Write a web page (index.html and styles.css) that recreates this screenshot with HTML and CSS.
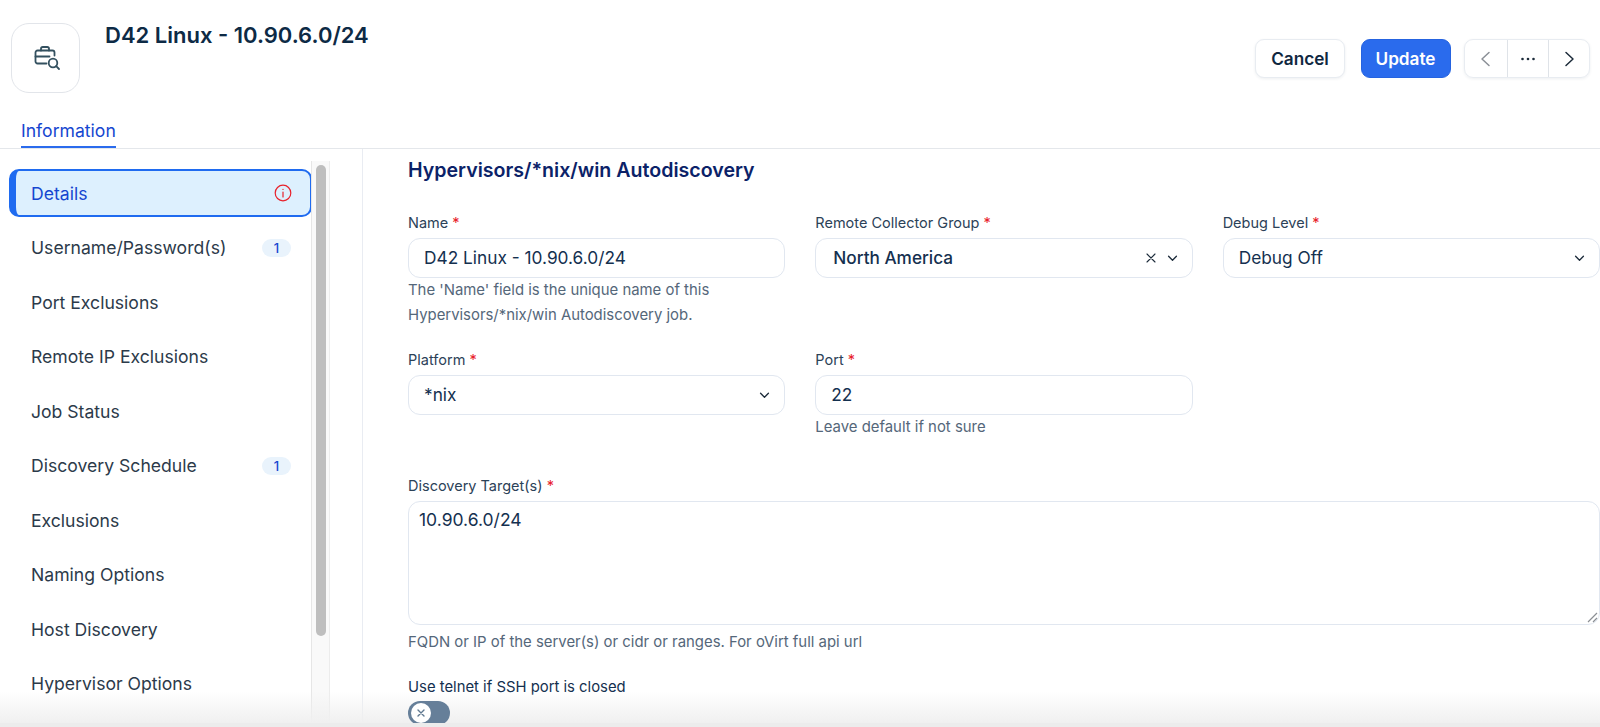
FILE: index.html
```html
<!DOCTYPE html>
<html lang="en">
<head>
<meta charset="utf-8">
<title>D42 Linux - 10.90.6.0/24</title>
<link rel="stylesheet" href="styles.css">
</head>
<body>
<div class="page">
  <header class="header">
    <div class="app-icon">
      <svg width="30" height="30" viewBox="0 0 30 30" fill="none" stroke="#33505f" stroke-width="1.8" stroke-linecap="round" stroke-linejoin="round">
        <path d="M15.5 20.5H6.5a2 2 0 0 1-2-2V9.5a2 2 0 0 1 2-2h15a2 2 0 0 1 2 2v3"/>
        <path d="M10 7.5V5.8A1.8 1.8 0 0 1 11.8 4h4.4A1.8 1.8 0 0 1 18 5.800V7.500"/>
        <path d="M4.500 13.500h14"/>
        <circle cx="22" cy="20" r="4.300"/>
        <path d="M25.200 23.200 28 26"/>
      </svg>
    </div>
    <h1 class="title">D42 Linux - 10.90.6.0/24</h1>
    <div class="actions">
      <button class="btn btn-cancel">Cancel</button>
      <button class="btn btn-update">Update</button>
      <div class="pager">
        <span class="pager-cell pager-prev"><svg width="16" height="16" viewBox="0 0 16 16" fill="none" stroke="#8a8f96" stroke-width="1.500" stroke-linecap="round" stroke-linejoin="round"><path d="M11 1.500 4 8l7 6.500"/></svg></span>
        <span class="pager-cell pager-more"><svg width="16" height="4" viewBox="0 0 16 4" fill="#1c2b3a"><circle cx="2.500" cy="2" r="1.300"/><circle cx="8" cy="2" r="1.300"/><circle cx="13.500" cy="2" r="1.300"/></svg></span>
        <span class="pager-cell pager-next"><svg width="16" height="16" viewBox="0 0 16 16" fill="none" stroke="#1c2b3a" stroke-width="1.500" stroke-linecap="round" stroke-linejoin="round"><path d="M5 1.500 12 8l-7 6.500"/></svg></span>
      </div>
    </div>
  </header>
  <nav class="tabs"><span class="tab">Information</span></nav>
  <div class="body">
    <aside class="sidebar">
      <ul class="menu">
        <li class="menu-item active">Details
          <svg class="alert" width="18" height="18" viewBox="0 0 18 18" fill="none" stroke="#e8212b" stroke-width="1.200" stroke-linecap="round"><circle cx="9" cy="9" r="7.800"/><path d="M9 8v5"/><path d="M9 5.300v.2"/></svg>
        </li>
        <li class="menu-item">Username/Password(s)<span class="count">1</span></li>
        <li class="menu-item">Port Exclusions</li>
        <li class="menu-item">Remote IP Exclusions</li>
        <li class="menu-item">Job Status</li>
        <li class="menu-item">Discovery Schedule<span class="count">1</span></li>
        <li class="menu-item">Exclusions</li>
        <li class="menu-item">Naming Options</li>
        <li class="menu-item">Host Discovery</li>
        <li class="menu-item">Hypervisor Options</li>
      </ul>
      <div class="scrolltrack"><div class="scrollthumb"></div></div>
    </aside>
    <div class="gutter"></div>
    <main class="form">
      <h2 class="form-title">Hypervisors/*nix/win Autodiscovery</h2>
      <div class="grid row-one">
        <div class="field">
          <label class="label">Name <em>*</em></label>
          <div class="control">D42 Linux - 10.90.6.0/24</div>
          <p class="help">The 'Name' field is the unique name of this<br>Hypervisors/*nix/win Autodiscovery job.</p>
        </div>
        <div class="field">
          <label class="label">Remote Collector Group <em>*</em></label>
          <div class="control select medium">North America
            <span class="select-icons">
              <svg width="10" height="10" viewBox="0 0 10 10" stroke="#1c2b3a" stroke-width="1.100" stroke-linecap="round"><path d="M1 1l8 8M9 1l-8 8"/></svg>
              <svg class="chev" width="11" height="7" viewBox="0 0 12 8" fill="none" stroke="#1c2b3a" stroke-width="1.500" stroke-linecap="round" stroke-linejoin="round"><path d="M1.500 1.500 6 6l4.500-4.500"/></svg>
            </span>
          </div>
        </div>
        <div class="field">
          <label class="label">Debug Level <em>*</em></label>
          <div class="control select">Debug Off
            <span class="select-icons"><svg class="chev" width="11" height="7" viewBox="0 0 12 8" fill="none" stroke="#1c2b3a" stroke-width="1.500" stroke-linecap="round" stroke-linejoin="round"><path d="M1.500 1.500 6 6l4.500-4.500"/></svg></span>
          </div>
        </div>
      </div>
      <div class="grid row-two">
        <div class="field">
          <label class="label">Platform <em>*</em></label>
          <div class="control select">*nix
            <span class="select-icons"><svg class="chev" width="11" height="7" viewBox="0 0 12 8" fill="none" stroke="#1c2b3a" stroke-width="1.500" stroke-linecap="round" stroke-linejoin="round"><path d="M1.500 1.500 6 6l4.500-4.500"/></svg></span>
          </div>
        </div>
        <div class="field">
          <label class="label">Port <em>*</em></label>
          <div class="control">22</div>
          <p class="help">Leave default if not sure</p>
        </div>
      </div>
      <div class="field targets">
        <label class="label">Discovery Target(s) <em>*</em></label>
        <div class="control area">10.90.6.0/24
          <svg class="resizer" width="12" height="12" viewBox="0 0 12 12" stroke="#8b8f94" stroke-width="1.200"><path d="M2 11 11 2M7 11l4-4"/></svg>
        </div>
        <p class="help">FQDN or IP of the server(s) or cidr or ranges. For oVirt full api url</p>
      </div>
      <div class="field telnet">
        <label class="label dark">Use telnet if SSH port is closed</label>
        <div class="toggle"><span class="knob"><svg width="8" height="8" viewBox="0 0 8 8" stroke="#5f7890" stroke-width="1.400" stroke-linecap="round"><path d="M1 1l6 6M7 1L1 7"/></svg></span></div>
      </div>
    </main>
  </div>
  <div class="fade"></div>
</div>
</body>
</html>
```

FILE: styles.css
```css
* { box-sizing: border-box; }
html, body { margin: 0; padding: 0; height: 100%; overflow: hidden; background: #fff; }
body { font-family: Inter, "Noto Sans", "Liberation Sans", sans-serif; color: #12263f; }
.page { position: relative; height: 727px; overflow: hidden; display: flex; flex-direction: column; }

.header { display: flex; align-items: flex-start; height: 121px; padding: 23px 10px 0 11px; flex: none; }
.app-icon { width: 69px; height: 70px; border: 1px solid #e2e5ea; border-radius: 18px; display: flex; align-items: center; justify-content: center; flex: none; }
.title { margin: 0 0 0 25px; font-size: 22px; line-height: 24px; font-weight: 600; color: #0d2a45; }
.actions { margin-left: auto; margin-top: 16px; display: flex; align-items: center; }
.btn { height: 39px; border-radius: 9px; font: 600 17.200px Inter, sans-serif; padding: 0 0 1px; }
.btn-cancel { width: 90px; background: #fff; color: #0f2740; border: 1px solid #e8ecf1; box-shadow: 0 1px 3px rgba(30, 50, 80, .08); }
.btn-update { width: 90px; margin-left: 15.500px; background: #2a6bed; color: #fff; border: 1px solid #2563e0; }
.pager { width: 126px; height: 39px; margin-left: 13.500px; display: flex; border: 1px solid #e8ecf1; border-radius: 9px; box-shadow: 0 1px 3px rgba(30, 50, 80, .08); }
.pager-cell { flex: 1; display: flex; align-items: center; justify-content: center; }
.pager-prev { flex: 0 0 43px; border-right: 1px solid #dfe3e8; }
.pager-more { flex: 0 0 41px; border-right: 1px solid #dfe3e8; }

.tabs { height: 28px; flex: none; padding-left: 21px; border-bottom: 1px solid #e4e7eb; }
.tab { display: inline-block; height: 27px; font-size: 17.600px; line-height: 20px; color: #1546d0; border-bottom: 2px solid #2a6bed; }

.body { flex: none; display: flex; height: 574px; }
.sidebar { width: 330px; flex: none; display: flex; height: 574px; }
.menu { list-style: none; margin: 0; padding: 20px 0 0 9px; width: 311px; flex: none; overflow: hidden; }
.menu-item { height: 48px; margin-bottom: 6.500px; padding: 0 20px 0 22px; display: flex; align-items: center; justify-content: space-between; font-size: 17.600px; color: #2c3a4a; }
.menu-item.active { background: #ddf0fe; color: #1546d0; border: 2px solid #1f6bf0; border-left-width: 7px; border-radius: 10px; padding-left: 15px; padding-right: 18px; margin-right: -1px; }
.count { min-width: 29px; height: 18px; border-radius: 9px; background: #e9f3fc; color: #1546d0; font-size: 13px; font-weight: 500; line-height: 18px; text-align: center; }
.scrolltrack { flex: none; width: 19px; margin-top: 12px; height: 562px; background: #f9f9f9; border-left: 1px solid #e6e6e6; border-right: 1px solid #ececec; padding: 4px 0 0 4px; }
.scrollthumb { width: 10px; height: 471px; border-radius: 5px; background: #bebebe; }
.gutter { width: 33px; flex: none; height: 574px; border-right: 1px solid #e9ecf2; }

.form { flex: 1; min-width: 0; height: 574px; padding: 0 0 0 45px; overflow: hidden; }
.form-title { margin: 9px 0 0; font-size: 19.600px; line-height: 24px; font-weight: 600; color: #0b2268; }
.grid { display: grid; grid-template-columns: repeat(3, 1fr); column-gap: 30px; }
.row-one { margin-top: 31px; height: 137px; }
.row-two { height: 126px; }
.label { display: block; height: 25px; font-size: 14.500px; line-height: 20px; color: #2c4258; }
.label.dark { color: #14304f; font-size: 14.850px; }
.label em { font-style: normal; color: #e8212b; }
.control { position: relative; height: 40px; border: 1px solid #e1e7f0; border-radius: 12px; padding: 0 15px; font-size: 17.300px; line-height: 38px; color: #14304f; display: block; }
.medium { font-weight: 500; font-size: 17.200px; padding-left: 17px; }
.select { display: flex; align-items: center; justify-content: space-between; }
.select-icons { display: flex; align-items: center; gap: 11px; margin-right: -1px; }
.help { margin: 0; font-size: 14.900px; line-height: 25px; color: #55677a; }
.targets { height: 201px; }
.area { height: 124px; padding: 6px 10px; line-height: 24px; font-size: 17.500px; }
.resizer { position: absolute; right: 1px; bottom: 1px; }
.targets .help { margin-top: 5px; }
.telnet .label { height: 24px; }
.toggle { position: relative; z-index: 2; width: 42px; height: 24px; border-radius: 12px; background: #667f99; padding: 2px 0 0 3px; }
.knob { width: 20px; height: 20px; border-radius: 50%; background: #fff; display: flex; align-items: center; justify-content: center; }

.fade { position: absolute; z-index: 1; left: 0; right: 0; bottom: 0; height: 36px; background: linear-gradient(to bottom, rgba(240, 240, 240, 0), #f0f0f0 88%, #ececec 88%); pointer-events: none; }
```
